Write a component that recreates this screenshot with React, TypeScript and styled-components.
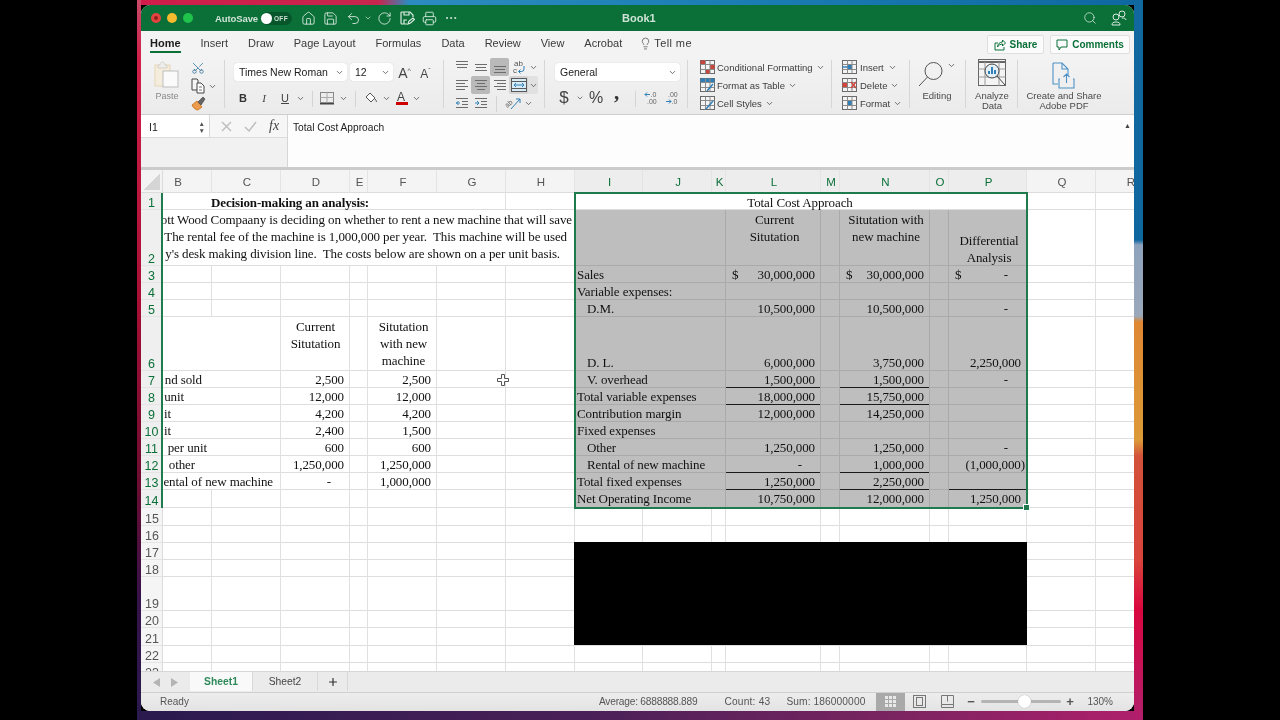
import React from "react";
import styled, { createGlobalStyle } from "styled-components";
import { House, Save, Undo2, RotateCw, Printer, Ellipsis, Search, Scissors, Lightbulb, ChevronDown, Plus } from "lucide-react";

const Global = createGlobalStyle`
  html, body { margin: 0; padding: 0; background: #000; }
  #root { width: 1280px; height: 720px; overflow: hidden; }
  * { box-sizing: border-box; }
`;

const UI = `"Liberation Sans", Arial, sans-serif`;
const GREEN = "#0a7038";

const Page = styled.div`
  width: 1280px; height: 720px; background: #000; display: flex; padding-left: 137px; font-family: ${UI};
  filter: blur(0.4px);
`;
const Wallpaper = styled.div`
  width: 1006px; height: 720px; padding: 5px 9px 9px 4px;
  background:
    linear-gradient(180deg, #11689f 0, #0f67a0 240px, #8ea3bc 245px, #9aa8ba 316px, #df8733 322px, #dc9a38 440px, #d2523a 456px, #d8443a 560px, #d9073f 610px, #b01f6c 720px) right top / 9px 100% no-repeat,
    linear-gradient(180deg, #c84a68 0, #d0204a 60px, #a80f35 300px, #6e0c30 480px, #35124a 600px, #2a1a4e 720px) left top / 4px 100% no-repeat,
    linear-gradient(90deg, #d01c4a 0, #c8254e 24%, #2c8cc0 27%, #1b7db4 60%, #0f67a0 100%) left top / 100% 5px no-repeat,
    linear-gradient(90deg, #2a1a4e 0, #4a2058 45%, #7a2460 75%, #b01f6c 100%) left bottom / 100% 9px no-repeat;
`;
const Window = styled.div`
  width: 993px; height: 706px; border-radius: 9px; overflow: hidden; display: flex; flex-direction: column; background: #fff;
`;

/* Title bar */
const TitleBar = styled.div`
  height: 26px; flex: none; background: ${GREEN}; display: flex; align-items: center; color: #e8f2ec; padding-right: 2px;
`;
const TitleLeft = styled.div`
  flex: 0 0 481px; display: flex; align-items: center; padding-left: 10px;
`;
const Light = styled.span<{ $c: string; $dot?: boolean }>`
  width: 10px; height: 10px; border-radius: 50%; background: ${(p) => p.$c}; margin-right: 6px; display: flex; align-items: center; justify-content: center;
  &::after { content: ""; width: 4px; height: 4px; border-radius: 50%; background: ${(p) => (p.$dot ? "#8e1f1c" : "transparent")}; }
`;
const AutoSave = styled.span`
  font-size: 9.5px; font-weight: 700; margin-left: 16px; color: #cfe3d7; letter-spacing: -0.1px; width: 46px;
`;
const Toggle = styled.span`
  width: 31px; height: 13px; border-radius: 7px; background: #07562b; display: flex; align-items: center; gap: 2px; font-size: 6.5px; letter-spacing: .3px; color: #cde0d4; font-weight: 700;
  &::before { content: ""; width: 11px; height: 11px; border-radius: 50%; background: #fff; margin-left: 0; }
  margin-right: 5px;
`;
const TitleBtn = styled.span<{ $w?: number; $ml?: number }>`
  width: ${(p) => p.$w ?? 22}px; height: 20px; display: flex; align-items: center; justify-content: center; color: #dcebe2; flex: none; margin-left: ${(p) => p.$ml ?? 0}px;
`;
const BookName = styled.span`
  font-size: 11px; font-weight: 700; color: #cfe3d7; width: 31px; white-space: nowrap;
`;
const TitleRight = styled.div`
  margin-left: auto; display: flex;
`;

/* Tabs */
const TabsRow = styled.div`
  height: 25px; flex: none; background: #f3f3f3; display: flex; align-items: flex-start; padding: 0 4px 0 9px; gap: 20px;
`;
const Tab = styled.span<{ $on?: boolean }>`
  height: 22px; padding-top: 4px; font-size: 11px; line-height: 16px; color: ${(p) => (p.$on ? "#1d1d1d" : "#3a3a3a")}; font-weight: ${(p) => (p.$on ? 700 : 400)};
  border-bottom: 2px solid ${(p) => (p.$on ? GREEN : "transparent")}; white-space: nowrap; display: flex; align-items: center;
`;
const TellMe = styled(Tab)`
  margin-left: -3px; gap: 2px; letter-spacing: 0.4px;
`;
const HeadActions = styled.div`
  margin-left: auto; display: flex; gap: 6px; padding-top: 4px;
`;
const HeadBtn = styled.span<{ $w: number }>`
  width: ${(p) => p.$w}px; height: 19px; background: #fbfbfb; border: 1px solid #dfdfdf; border-radius: 2px; color: ${GREEN}; font-size: 10px; font-weight: 700;
  display: flex; align-items: center; justify-content: center; gap: 4px;
`;

/* Ribbon */
const Ribbon = styled.div`
  height: 59px; flex: none; display: flex; background: linear-gradient(180deg, #f3f3f3, #ebebeb); border-bottom: 1px solid #cfcfcf;
`;
const Group = styled.div<{ $w: number; $pl?: number; $last?: boolean }>`
  width: ${(p) => p.$w}px; flex: none; padding-left: ${(p) => p.$pl ?? 0}px; height: 58px;
  background: ${(p) => (p.$last ? "none" : "linear-gradient(#d6d6d6, #d6d6d6) right 4px / 1px 48px no-repeat")};
`;
const ClipGroup = styled(Group)`
  display: flex;
`;
const PasteCol = styled.div`
  width: 48px; padding: 5px 9px 0 13px; display: flex; flex-direction: column; gap: 3px;
`;
const SmallLabel = styled.span<{ $c?: string; $s?: number }>`
  font-size: ${(p) => p.$s ?? 9.5}px; line-height: 10px; color: ${(p) => p.$c ?? "#4a4a4a"}; text-align: center; white-space: nowrap; display: block;
`;
const ClipTools = styled.div`
  display: flex; flex-direction: column; align-items: flex-start; padding-top: 3px; width: 30px;
`;
const ToolRow = styled.div<{ $h?: number; $ml?: number }>`
  display: flex; align-items: center; height: ${(p) => p.$h ?? 18}px; margin-left: ${(p) => p.$ml ?? 0}px;
`;
const TurnedScissors = styled(Scissors)`
  transform: rotate(-90deg);
`;
const Select = styled.div<{ $w: number }>`
  width: ${(p) => p.$w}px; height: 18px; background: #fff; border-radius: 3px; box-shadow: 0 0 1px #bbb; font-size: 10.5px; color: #222;
  display: flex; align-items: center; justify-content: space-between; padding: 0 3px 0 5px; margin-right: 3px; white-space: nowrap; flex: none;
`;
const IconBtn = styled.span<{ $w?: number; $bg?: string; $mr?: number }>`
  width: ${(p) => p.$w ?? 18}px; height: 18px; flex: none; display: flex; align-items: center; justify-content: center; color: #444;
  background: ${(p) => p.$bg ?? "transparent"}; margin-right: ${(p) => p.$mr ?? 0}px; border-radius: 2px; font-size: 12px;
`;
const BoldLetter = styled.span`
  font-weight: 700; font-size: 11px; font-family: ${UI}; color: #333;
`;
const ItalicLetter = styled.span`
  font-style: italic; font-size: 11px; font-family: "Liberation Serif", serif; color: #444;
`;
const UnderLetter = styled.span`
  text-decoration: underline; font-size: 11px; color: #444;
`;
const BigA = styled.span<{ $s: number }>`
  font-size: ${(p) => p.$s}px; color: #444; line-height: 18px;
`;
const Caret = styled.span`
  font-size: 7px; color: #555; vertical-align: 5px;
`;
const VSep = styled.span<{ $ml: number; $mr: number }>`
  width: 1px; height: 16px; flex: none; background: #d4d4d4; margin: 1px ${(p) => p.$mr}px 0 ${(p) => p.$ml}px;
`;
const GlyphBig = styled.span<{ $s: number }>`
  font-size: ${(p) => p.$s}px; color: #444; font-family: ${UI}; line-height: 18px;
`;
const CommaGlyph = styled.span`
  font-size: 21px; color: #333; font-weight: 700; font-family: "Liberation Serif", serif; line-height: 18px; margin: -13px 3px 0 0;
`;
const AlignGrid = styled.div`
  padding: 2px 0 0 8px; display: grid; grid-template-rows: repeat(3, 18px);
`;
const AlignRow = styled.div`
  display: flex; align-items: center; height: 18px;
`;
const MergeWrap = styled.span`
  display: flex; background: #e1e1e1; border-radius: 2px;
`;
const Rows = styled.div<{ $pt: number }>`
  padding-top: ${(p) => p.$pt}px; display: flex; flex-direction: column;
`;
const Row2 = styled.div<{ $mt?: number }>`
  display: flex; align-items: center; height: 18px; margin-top: ${(p) => p.$mt ?? 0}px;
`;
const ListItem = styled.div`
  display: flex; align-items: center; height: 18px; font-size: 9.5px; color: #3c3c3c; white-space: nowrap;
`;
const ListIcon = styled.span<{ $mr: number }>`
  display: flex; width: 15px; margin-right: ${(p) => p.$mr}px; flex: none;
`;
const Chev = styled(ChevronDown)<{ $ml?: number }>`
  margin-left: ${(p) => p.$ml ?? 0}px; color: #444; flex: none;
`;
const BigTool = styled.div<{ $w: number }>`
  width: ${(p) => p.$w}px; display: flex; flex-direction: column; align-items: center; height: 58px;
`;
const BigIconBox = styled.div<{ $h: number; $pt: number }>`
  height: ${(p) => p.$h}px; padding-top: ${(p) => p.$pt}px; display: flex; align-items: flex-start; justify-content: center; flex: none;
`;

/* Formula bar */
const FormulaBar = styled.div`
  height: 52px; flex: none; display: flex; background: #fdfdfd;
`;
const NameCol = styled.div`
  width: 147px; flex: none; display: flex; flex-direction: column; border-right: 1px solid #d6d6d6;
`;
const NameRow = styled.div`
  height: 22px; display: flex; background: #f6f6f6;
`;
const NameBox = styled.div`
  width: 69px; background: #fff; border-right: 1px solid #d8d8d8; font-size: 10.5px; color: #222; display: flex; align-items: center; justify-content: space-between; padding: 1px 4px 0 8px;
`;
const Spin = styled.span`
  display: flex; flex-direction: column; font-size: 6.5px; line-height: 7px; color: #555;
`;
const FxTools = styled.div`
  flex: 1; display: flex; align-items: center; padding-left: 11px; gap: 12px;
`;
const FxLabel = styled.span`
  font-family: "Liberation Serif", serif; font-style: italic; font-size: 14px; color: #444;
`;
const NameSpare = styled.div`
  flex: 1; background: #f1f1f1; border-top: 1px solid #dcdcdc;
`;
const FormulaText = styled.div`
  flex: 1; font-size: 10.2px; color: #222; padding: 7px 0 0 5px; line-height: 12px;
`;
const Collapse = styled.span`
  font-size: 7px; color: #444; padding: 7px 3px 0 0;
`;
const Divider = styled.div`
  height: 3px; flex: none; background: #cbcbcb;
`;

/* Sheet */
const colNames = "B C D E F G H I J K L M N O P Q R".split(" ");
const colW = [49, 69, 69, 18, 69, 69, 69, 68, 69, 14, 95, 19, 90, 19, 78, 69, 69];
const rowH = [17, 56, 17, 17, 17, 54, 17, 17, 17, 17, 17, 17, 17, 17.5, 18, 17, 17, 17, 34, 17, 18, 17, 17];

const Sheet = styled.div`
  height: 501px; width: 993px; overflow: hidden; display: grid; background: #fff;
  grid-template-columns: 22px ${colW.map((w) => w + "px").join(" ")};
  grid-template-rows: 23px ${rowH.map((h) => h + "px").join(" ")};
  font-family: "Liberation Serif", "Times New Roman", serif; font-size: 13px; color: #111; letter-spacing: -0.1px;
`;
const Corner = styled.div`
  grid-column: 1; grid-row: 1; background: #f3f3f3; border-right: 1px solid #dcdcdc; border-bottom: 1px solid #dcdcdc; display: flex; align-items: flex-end; justify-content: flex-end; padding: 0 2px 2px 0;
  &::after { content: ""; width: 16px; height: 16px; background: linear-gradient(135deg, transparent 50%, #d5d5d5 50%); }
`;
const ColHead = styled.div<{ $col: number; $sel: boolean; $clipped: boolean }>`
  grid-column: ${(p) => p.$col}; grid-row: 1; font-family: ${UI}; font-size: 11.5px; display: flex; align-items: center; justify-content: center; letter-spacing: 0;
  padding: ${(p) => (p.$clipped ? "1px 18px 0 0" : "1px 0 0 2px")};
  color: ${(p) => (p.$sel ? GREEN : "#555")}; background: ${(p) => (p.$sel ? "#ededed" : "#f4f4f4")}; border-right: 1px solid #e4e4e4; border-bottom: 1px solid #dcdcdc;
`;
const RowHead = styled.div<{ $row: number; $sel: boolean }>`
  grid-column: 1; grid-row: ${(p) => p.$row}; font-family: ${UI}; font-size: 12.5px; line-height: 13px; display: flex; align-items: flex-end; justify-content: center; padding: 0 0 0 1px; letter-spacing: 0;
  color: ${(p) => (p.$sel ? GREEN : "#555")}; background: ${(p) => (p.$sel ? "#efefef" : "#f5f5f5")};
  border-right: ${(p) => (p.$sel ? `2px solid #1f7a4d` : "1px solid #dcdcdc")}; box-shadow: inset 0 -1px #e4e4e4;
`;
const Cell = styled.div<{ $col: number; $span: number; $row: number; $shade: boolean; $h: string; $v: string; $under: boolean; $pt: number }>`
  grid-column: ${(p) => p.$col} / span ${(p) => p.$span}; grid-row: ${(p) => p.$row}; overflow: hidden; display: flex; flex-direction: column;
  align-items: ${(p) => p.$h}; justify-content: ${(p) => p.$v}; line-height: 17px; white-space: pre; padding-top: ${(p) => p.$pt}px;
  background: ${(p) => (p.$shade ? "#bebebe" : "#fff")};
  box-shadow: inset -1px 0 ${(p) => (p.$shade ? "#aaaaaa" : "#e0e0e0")}, inset 0 -1px ${(p) => (p.$under ? "#1a1a1a" : p.$shade ? "#aaaaaa" : "#dedede")};
`;
const Line = styled.div<{ $l: number; $r: number; $bold?: boolean }>`
  flex: none; padding: 0 ${(p) => p.$r}px 0 ${(p) => p.$l}px; font-weight: ${(p) => (p.$bold ? 700 : 400)}; letter-spacing: ${(p) => (p.$bold ? "-0.14px" : "inherit")};
`;
const AcctLine = styled.div<{ $r: number }>`
  flex: none; align-self: stretch; display: flex; justify-content: space-between; padding: 0 ${(p) => p.$r}px 0 6px;
`;
const Selection = styled.div`
  grid-column: 9 / 17; grid-row: 2 / 16; border: 2px solid #1f7a4d; margin: -1px; position: relative; pointer-events: none; z-index: 2;
  &::after { content: ""; position: absolute; right: -4px; bottom: -4px; width: 5px; height: 5px; background: #1f7a4d; border: 1px solid #fff; box-sizing: content-box; }
`;
const Redaction = styled.div`
  grid-column: 9 / 17; grid-row: 18 / 23; background: #000; margin: -1px 0 1px -1px; z-index: 2;
`;
const CursorMark = styled.svg`
  position: absolute; left: 356px; top: 204px; z-index: 3;
`;
const SheetWrap = styled.div`
  position: relative; flex: none; height: 501px;
`;

/* Bottom */
const SheetTabs = styled.div`
  height: 21px; flex: none; background: #ebebeb; border-top: 1px solid #d6d6d6; display: flex; align-items: flex-start; color: #666;
`;
const NavArrows = styled.div`
  width: 49px; height: 20px; display: flex; padding-left: 12px; gap: 11px; align-items: center; flex: none;
`;
const SheetTab = styled.div<{ $on?: boolean; $w: number }>`
  width: ${(p) => p.$w}px; height: 19px; flex: none; display: flex; align-items: center; justify-content: center; font-size: 10.3px;
  font-weight: ${(p) => (p.$on ? 700 : 400)}; color: ${(p) => (p.$on ? "#2f8a5a" : "#444")}; background: ${(p) => (p.$on ? "#f9f9f9" : "transparent")};
  border-right: 1px solid #d8d8d8;
`;
const AddSheet = styled(SheetTab)`
  color: #333;
`;
const Status = styled.div`
  height: 19px; flex: none; background: linear-gradient(180deg, #ededed, #e3e3e3); border-top: 1px solid #cfcfcf; display: flex; align-items: center; color: #555; padding-bottom: 1px;
`;
const Ready = styled.span`
  margin-left: 19px; margin-right: auto; font-size: 10px;
`;
const Stat = styled.span<{ $mr: number; $ls: number }>`
  margin-right: ${(p) => p.$mr}px; white-space: nowrap; font-size: 10.2px; letter-spacing: ${(p) => p.$ls}px;
`;
const ViewBtn = styled.span<{ $on?: boolean; $w: number }>`
  width: ${(p) => p.$w}px; height: 18px; display: flex; align-items: center; justify-content: center; background: ${(p) => (p.$on ? "#a9a9a9" : "transparent")}; color: #777; flex: none;
`;
const Zoom = styled.div`
  display: flex; align-items: center; margin-left: 5px; font-size: 10px;
`;
const Slider = styled.div`
  width: 80px; height: 3px; border-radius: 2px; background: #b4b4b4; margin: 0 4px 0 6px; position: relative;
`;
const Knob = styled.span`
  position: absolute; left: 37px; top: -5px; width: 13px; height: 13px; border-radius: 50%; background: #fff; box-shadow: 0 0 1px #999;
`;
const Pct = styled.span`
  margin: 0 21px 0 13px;
`;
const Pm = styled.span`
  font-size: 13px; color: #555; font-weight: 700; line-height: 12px; width: 9px; text-align: center;
`;

/* Drawn icons */
const LineIcon = ({ ls, w = 16 }: { ls: [number, number, number][]; w?: number }) => (
  <svg width={w} height={14} viewBox={`0 0 ${w} 14`} stroke="#6c6c6c" strokeWidth="1" fill="none">
    {ls.map(([a, b, y], i) => <path key={i} d={`M${a} ${y}.5H${b}`} />)}
  </svg>
);
const Wrap = () => (
  <svg width="16" height="16" viewBox="0 0 16 16" fill="none">
    <text x="3" y="7" fontSize="8" fill="#555" fontFamily={UI}>ab</text>
    <text x="2" y="14" fontSize="8" fill="#555" fontFamily={UI}>c</text>
    <path d="M13 7v3a2.500 2.500 0 0 1-2.500 2.500H8m1.500-2L7.500 12.500l2 2" stroke="#2f7fb8" strokeWidth="1" />
  </svg>
);
const MergeIcon = () => (
  <svg width="16" height="14" viewBox="0 0 16 14" fill="none">
    <rect x=".5" y=".5" width="15" height="13" fill="#d8ecf7" stroke="#5a5a5a" />
    <path d="M.5 3.500h15M.5 10.500h15" stroke="#5a5a5a" />
    <path d="M3 7h10M5 5L3 7l2 2M11 5l2 2-2 2" stroke="#2f7fb8" />
  </svg>
);
const Orient = () => (
  <svg width="18" height="16" viewBox="0 0 18 16" fill="none">
    <text x="1" y="11" fontSize="7" fill="#555" fontFamily={UI} transform="rotate(-40 5 9)">ab</text>
    <path d="M7 14L16 4m-4 0h4v4" stroke="#2f7fb8" strokeWidth="1" />
  </svg>
);
const Indent = ({ rev }: { rev?: boolean }) => (
  <svg width="14" height="12" viewBox="0 0 14 12" fill="none">
    <path d="M1 1.500h12M7 4.500h6M7 7.500h6M1 10.500h12" stroke="#6c6c6c" />
    {rev ? <path d="M1 6h4M3.500 4L1.500 6l2 2" stroke="#2f7fb8" /> : <path d="M1 6h4M3 4l2 2-2 2" stroke="#2f7fb8" />}
  </svg>
);
const Decimals = ({ more }: { more?: boolean }) => (
  <svg width="14" height="16" viewBox="0 0 14 16" fill="none">
    <text x={more ? 3 : 6.500} y="7" fontSize="7" fill="#666" fontFamily={UI}>{more ? ".00" : ".0"}</text>
    <text x={more ? 6.500 : 3} y="14" fontSize="7" fill="#666" fontFamily={UI}>{more ? ".0" : ".00"}</text>
    {more
      ? <path d="M1 11.500h5M4 9.500l2 2-2 2" stroke="#2f7fb8" />
      : <path d="M1 4.500h5M3 2.500l-2 2 2 2" stroke="#2f7fb8" />}
  </svg>
);
const Mini = ({ tint, cells, mark }: { tint: string; cells?: string; mark?: string }) => (
  <svg width="15" height="14" viewBox="0 0 15 14" fill="none">
    <rect x=".5" y=".5" width="14" height="13" fill="#f4f4f4" stroke="#6a6a6a" />
    {cells && <path d={cells} fill={tint} />}
    <path d="M.5 4.500h14M.5 9.500h14M5.500.5v13M10 .5v13" stroke="#8a8a8a" />
    {mark && <path d={mark} stroke={tint} strokeWidth="1.500" />}
  </svg>
);
const PasteIcon = () => (
  <svg width="26" height="27" viewBox="0 0 26 27" fill="none">
    <rect x="1" y="4" width="15" height="21" fill="#f4ecdc" stroke="#e6d6b6" />
    <path d="M6 4c0-4 5-4 5 0h2v3H4V4z" fill="#eee" stroke="#d6d0c6" />
    <rect x="9" y="10" width="15" height="16" fill="#fafafa" stroke="#bdbdbd" />
  </svg>
);
const CopyIcon = () => (
  <svg width="14" height="16" viewBox="0 0 14 16" fill="none" stroke="#444">
    <path d="M1 1h5l1 1v10H1z" fill="#f6f6f6" />
    <path d="M6 5h4l3 3v7H6z" fill="#fff" />
    <path d="M8 9h3M8 12h3" stroke="#777" />
  </svg>
);
const BrushIcon = () => (
  <svg width="16" height="16" viewBox="0 0 16 16" fill="none">
    <path d="M1 10l5-4 5 6-4 3C5 15 2 13 1 10z" fill="#eb9c4e" stroke="#d07f2e" />
    <path d="M7 7l5-5 2 2-4 6z" fill="#666" stroke="#444" strokeWidth=".7" />
  </svg>
);
const BorderIcon = () => (
  <svg width="16" height="14" viewBox="0 0 16 14" fill="none">
    <rect x="1.500" y="1.500" width="13" height="10" stroke="#888" />
    <path d="M8 1.500v10M1.500 6.500h13" stroke="#aaa" />
    <path d="M1 12.800h14" stroke="#444" strokeWidth="1.500" />
  </svg>
);
const FillIcon = () => (
  <svg width="14" height="14" viewBox="0 0 14 14" fill="none" stroke="#555">
    <path d="M6 2l5 5-4 4-5-5z" fill="#fff" />
    <path d="M11 8c1 1.500 1.500 2 1.500 3" stroke="#555" />
  </svg>
);
const ColorA = () => (
  <svg width="14" height="16" viewBox="0 0 14 16">
    <text x="2" y="11" fontSize="12" fill="#444" fontFamily={UI}>A</text>
    <rect x="1" y="12" width="12" height="3" fill="#c00" />
  </svg>
);
const Lens = () => (
  <svg width="27" height="27" viewBox="0 0 27 27" fill="none" stroke="#555" strokeWidth="1">
    <circle cx="15.500" cy="10" r="8.500" />
    <path d="M9.500 16L1 25" />
  </svg>
);
const Analyze = () => (
  <svg width="28" height="30" viewBox="0 0 28 30" fill="none" stroke="#666">
    <rect x=".5" y=".5" width="27" height="26" fill="#f4f4f4" />
    <path d="M.5 3h27" strokeWidth="2" stroke="#666" />
    <path d="M.5 10h27M.5 18h27M7 3v24M21 3v24" stroke="#9a9a9a" />
    <circle cx="14" cy="12" r="7" fill="#e4eff7" stroke="#444" />
    <path d="M19 17l8 9" stroke="#444" />
    <path d="M11 15v-3M14 15V8M17 15v-4" stroke="#2f7fb8" strokeWidth="2" />
  </svg>
);
const Adobe = () => (
  <svg width="24" height="28" viewBox="0 0 24 28" fill="none" stroke="#4d92c6" strokeWidth="1.100">
    <path d="M1 1h9l6 6v6" />
    <path d="M1 1v21h5" />
    <path d="M10 1v6h6" />
    <path d="M8 17h-1v9h15v-9h-1M14.500 21V12M11.500 15l3-3 3 3" stroke="#4d92c6" />
  </svg>
);
const People = () => (
  <svg width="17" height="17" viewBox="0 0 17 17" fill="none" stroke="#dcebe2" strokeWidth="1">
    <circle cx="6" cy="7" r="3" />
    <circle cx="12" cy="4" r="3" />
    <path d="M2 15c0-2 1-3 4-3s4 1 4 3zM12 8c2 0 4 .5 4 2" />
  </svg>
);
const SaveEdit = () => (
  <svg width="16" height="16" viewBox="0 0 16 16" fill="none" stroke="#dcebe2" strokeWidth="1.200">
    <path d="M8 14H3a1 1 0 0 1-1-1V3a1 1 0 0 1 1-1h8l3 3v2" />
    <path d="M5 2v3h5V2M5 14v-4h3" />
    <path d="M9 14l1-3 4-3 1.500 1.500-4 3.500z" />
  </svg>
);
const ShareIco = () => (
  <svg width="12" height="12" viewBox="0 0 12 12" fill="none" stroke={GREEN} strokeWidth="1">
    <path d="M4 4H1v7h9V8" />
    <path d="M3.500 8c0-3 2.500-5 5-5V1l3 3-3 3V5c-2 0-4 1-5 3z" />
  </svg>
);
const CommentIco = () => (
  <svg width="12" height="12" viewBox="0 0 12 12" fill="none" stroke={GREEN} strokeWidth="1">
    <path d="M1 1h10v7H5l-2 3V8H1z" />
  </svg>
);
const Tri = ({ dir }: { dir: "l" | "r" }) => (
  <svg width="7" height="9" viewBox="0 0 7 9"><path d={dir === "l" ? "M7 0v9L0 4.500z" : "M0 0v9l7-4.500z"} fill="#b4b4b4" /></svg>
);
const V1 = () => (
  <svg width="13" height="13" viewBox="0 0 13 13" fill="#e9e9e9"><path d="M1 1h3v3H1zM5 1h3v3H5zM9 1h3v3H9zM1 5h3v3H1zM5 5h3v3H5zM9 5h3v3H9zM1 9h3v3H1zM5 9h3v3H5zM9 9h3v3H9z" /></svg>
);
const V2 = () => (
  <svg width="13" height="13" viewBox="0 0 13 13" fill="none" stroke="#777"><rect x=".5" y=".5" width="12" height="12" /><rect x="3.500" y="2.500" width="6" height="8" /></svg>
);
const V3 = () => (
  <svg width="13" height="13" viewBox="0 0 13 13" fill="none" stroke="#777"><path d="M.5 9.500v-9h12v9h-12v3h12v-3M6.500 .5v6" /></svg>
);

/* Sheet data */
type Spec = {
  text?: string[]; h?: string; v?: string; span?: number; l?: number[]; r?: number[]; under?: boolean; bold?: boolean; dollar?: boolean;
};
const R = (t: string, r = 6, under = false): Spec => ({ text: [t], h: "flex-end", r: [r], under });
const L = (t: string, l = 2, span = 3): Spec => ({ text: [t], h: "flex-start", l: [l], span });
const D = (t: string, r: number): Spec => ({ text: [t], dollar: true, r: [r] });
const Clip = (t: string, r: number): Spec => ({ span: 2, h: "flex-end", text: [t], r: [r] });
const U: Spec = { under: true };

const sheet: Record<string, Spec> = {
  B1: { span: 6, v: "flex-start", text: ["Decision-making an analysis:"], h: "flex-end", r: [137], bold: true },
  I1: { span: 8, v: "flex-start", text: ["Total Cost Approach"], h: "center", r: [2] },
  B2: { span: 7, v: "flex-start", h: "flex-end", text: ["ott Wood Compaany is deciding on whether to rent a new machine that will save", "The rental fee of the machine is 1,000,000 per year.  This machine will be used", "y's desk making division line.  The costs below are shown on a per unit basis."], r: [3, 8, 15] },
  I2: { span: 3 },
  L2: { v: "flex-start", h: "center", text: ["Current", "Situtation"], l: [2, 2] },
  N2: { v: "flex-start", h: "center", text: ["Situtation with", "new machine"], l: [2, 2] },
  P2: { h: "center", text: ["Differential", "Analysis"], l: [2, 2] },
  I3: L("Sales"), L3: D("30,000,000", 6), N3: D("30,000,000", 6), P3: D("-", 19),
  I4: L("Variable expenses:"),
  I5: L("D.M.", 12), L5: R("10,500,000"), N5: R("10,500,000"), P5: R("-", 19),
  B6: { span: 2 },
  D6: { v: "flex-start", h: "center", text: ["Current", "Situtation"] },
  F6: { v: "flex-start", h: "center", text: ["Situtation", "with new", "machine"], l: [2, 2, 2] },
  I6: L("D. L.", 12), L6: R("6,000,000"), N6: R("3,750,000"), P6: R("2,250,000"),
  B7: Clip("nd sold", 79), D7: R("2,500"), F7: R("2,500"),
  I7: L("V. overhead", 12), L7: R("1,500,000", 6, true), N7: R("1,500,000", 6, true), P7: R("-", 19),
  B8: Clip("unit", 97), D8: R("12,000"), F8: R("12,000"),
  I8: L("Total variable expenses"), L8: R("18,000,000", 6, true), N8: R("15,750,000", 6, true),
  B9: Clip("it", 110), D9: R("4,200"), F9: R("4,200"),
  I9: L("Contribution margin"), L9: R("12,000,000"), N9: R("14,250,000"),
  B10: Clip("it", 110), D10: R("2,400"), F10: R("1,500"),
  I10: L("Fixed expenses"),
  B11: Clip("per unit", 74), D11: R("600"), F11: R("600"),
  I11: L("Other", 12), L11: R("1,250,000"), N11: R("1,250,000"), P11: R("-", 19),
  B12: Clip("other", 86), D12: R("1,250,000"), F12: R("1,250,000"),
  I12: L("Rental of new machine", 12), L12: R("-", 19, true), N12: R("1,000,000", 6, true), P12: R("(1,000,000)", 2),
  B13: Clip("ental of new machine", 8), D13: R("-", 19), F13: R("1,000,000"),
  I13: L("Total fixed expenses"), L13: R("1,250,000", 6, true), N13: R("2,250,000", 6, true), P13: U,
  I14: L("Net Operating Income"), L14: R("10,750,000"), N14: R("12,000,000"), P14: R("1,250,000"),
};

const renderCells = () => {
  const out: React.ReactNode[] = [];
  rowH.forEach((_, ri) => {
    const rowNo = ri + 1;
    let skip = 0;
    colNames.forEach((name, ci) => {
      if (skip > 0) { skip--; return; }
      const s = sheet[name + rowNo] ?? {};
      const span = s.span ?? 1;
      skip = span - 1;
      const shade = rowNo >= 2 && rowNo <= 14 && ci >= 7 && ci <= 14;
      const v = rowNo === 14 ? "center" : s.v ?? "flex-end";
      out.push(
        <Cell key={name + rowNo} $col={ci + 2} $span={span} $row={rowNo + 1} $shade={shade}
          $h={s.h ?? "flex-start"} $v={v} $under={!!s.under} $pt={v === "flex-start" ? 1 : 0}>
          {s.dollar ? (
            <AcctLine $r={s.r?.[0] ?? 6}><span>$</span><span>{s.text?.[0]}</span></AcctLine>
          ) : (
            s.text?.map((t, i) => <Line key={i} $l={s.l?.[i] ?? 0} $r={s.r?.[i] ?? 0} $bold={s.bold}>{t}</Line>)
          )}
        </Cell>
      );
    });
  });
  return out;
};

export default function App() {
  const ic = { size: 15, strokeWidth: 1.4 };
  return (
    <Page>
      <Global />
      <Wallpaper>
        <Window>
          <TitleBar>
            <TitleLeft>
              <Light $c="#e2433e" $dot /><Light $c="#f4bb2e" /><Light $c="#1fc24b" />
              <AutoSave>AutoSave</AutoSave>
              <Toggle>OFF</Toggle>
              <TitleBtn><House {...ic} /></TitleBtn>
              <TitleBtn><Save {...ic} /></TitleBtn>
              <TitleBtn $ml={1}><Undo2 {...ic} /></TitleBtn>
              <TitleBtn $w={8}><ChevronDown size={8} strokeWidth={2} /></TitleBtn>
              <TitleBtn $ml={1}><RotateCw {...ic} /></TitleBtn>
              <TitleBtn $ml={1}><SaveEdit /></TitleBtn>
              <TitleBtn><Printer {...ic} /></TitleBtn>
              <TitleBtn><Ellipsis size={14} strokeWidth={1.6} /></TitleBtn>
            </TitleLeft>
            <BookName>Book1</BookName>
            <TitleRight>
              <TitleBtn $w={28}><Search size={14} strokeWidth={1.3} /></TitleBtn>
              <TitleBtn $w={28}><People /></TitleBtn>
            </TitleRight>
          </TitleBar>

          <TabsRow>
            <Tab $on>Home</Tab><Tab>Insert</Tab><Tab>Draw</Tab><Tab>Page Layout</Tab><Tab>Formulas</Tab><Tab>Data</Tab><Tab>Review</Tab><Tab>View</Tab><Tab>Acrobat</Tab>
            <TellMe><Lightbulb size={13} strokeWidth={1.2} />Tell me</TellMe>
            <HeadActions>
              <HeadBtn $w={57}><ShareIco />Share</HeadBtn>
              <HeadBtn $w={80}><CommentIco />Comments</HeadBtn>
            </HeadActions>
          </TabsRow>

          <Ribbon>
            <ClipGroup $w={84}>
              <PasteCol>
                <PasteIcon />
                <SmallLabel $c="#8a8a8a" $s={9}>Paste</SmallLabel>
              </PasteCol>
              <ClipTools>
                <ToolRow><IconBtn><TurnedScissors size={14} strokeWidth={1.3} color="#2f6f98" /></IconBtn></ToolRow>
                <ToolRow><IconBtn><CopyIcon /></IconBtn><Chev size={9} strokeWidth={2} $ml={1} /></ToolRow>
                <ToolRow $h={16} $ml={1}><IconBtn><BrushIcon /></IconBtn></ToolRow>
              </ClipTools>
            </ClipGroup>

            <Group $w={219} $pl={9}>
              <Rows $pt={7}>
                <Row2>
                  <Select $w={113}>Times New Roman<Chev size={9} strokeWidth={2} /></Select>
                  <Select $w={43}>12<Chev size={9} strokeWidth={2} /></Select>
                  <IconBtn $w={17} $mr={4}><BigA $s={14}>A<Caret>^</Caret></BigA></IconBtn>
                  <IconBtn $w={17}><BigA $s={12}>A<Caret>ˇ</Caret></BigA></IconBtn>
                </Row2>
                <Row2 $mt={8}>
                  <IconBtn $mr={3}><BoldLetter>B</BoldLetter></IconBtn>
                  <IconBtn $mr={3}><ItalicLetter>I</ItalicLetter></IconBtn>
                  <IconBtn><UnderLetter>U</UnderLetter></IconBtn>
                  <IconBtn $w={12}><Chev size={9} strokeWidth={2} /></IconBtn>
                  <VSep $ml={6} $mr={5} />
                  <IconBtn><BorderIcon /></IconBtn>
                  <IconBtn $w={14}><Chev size={9} strokeWidth={2} /></IconBtn>
                  <VSep $ml={5} $mr={6} />
                  <IconBtn><FillIcon /></IconBtn>
                  <IconBtn $w={12}><Chev size={9} strokeWidth={2} /></IconBtn>
                  <IconBtn $w={20}><ColorA /></IconBtn>
                  <IconBtn $w={8}><Chev size={9} strokeWidth={2} /></IconBtn>
                </Row2>
              </Rows>
            </Group>

            <Group $w={101}>
              <AlignGrid>
                <AlignRow>
                  <IconBtn $w={19}><LineIcon ls={[[2, 14, 1], [2, 14, 4], [3, 13, 7]]} /></IconBtn>
                  <IconBtn $w={19}><LineIcon ls={[[2, 14, 4], [3, 13, 7], [2, 14, 10]]} /></IconBtn>
                  <IconBtn $w={19} $bg="#b9b9b9"><LineIcon ls={[[2, 14, 6], [3, 13, 9], [2, 14, 12]]} /></IconBtn>
                  <IconBtn $w={19}><Wrap /></IconBtn>
                  <IconBtn $w={10}><Chev size={9} strokeWidth={2} /></IconBtn>
                </AlignRow>
                <AlignRow>
                  <IconBtn $w={19}><LineIcon ls={[[2, 14, 2], [2, 11, 5], [2, 14, 8], [2, 11, 11]]} /></IconBtn>
                  <IconBtn $w={19} $bg="#b9b9b9"><LineIcon ls={[[2, 14, 2], [4, 12, 5], [2, 14, 8], [4, 12, 11]]} /></IconBtn>
                  <IconBtn $w={19}><LineIcon ls={[[2, 14, 2], [5, 14, 5], [2, 14, 8], [5, 14, 11]]} /></IconBtn>
                  <MergeWrap>
                    <IconBtn $w={19} $bg="#d4d4d4"><MergeIcon /></IconBtn>
                    <IconBtn $w={10}><Chev size={9} strokeWidth={2} /></IconBtn>
                  </MergeWrap>
                </AlignRow>
                <AlignRow>
                  <IconBtn $w={19}><Indent rev /></IconBtn>
                  <IconBtn $w={19}><Indent /></IconBtn>
                  <VSep $ml={6} $mr={5} />
                  <IconBtn $w={22}><Orient /></IconBtn>
                  <IconBtn $w={8}><Chev size={9} strokeWidth={2} /></IconBtn>
                </AlignRow>
              </AlignGrid>
            </Group>

            <Group $w={143} $pl={10}>
              <Rows $pt={7}>
                <Row2><Select $w={125}>General<Chev size={9} strokeWidth={2} /></Select></Row2>
                <Row2 $mt={8}>
                  <IconBtn $w={18}><GlyphBig $s={17}>$</GlyphBig></IconBtn>
                  <IconBtn $w={13}><Chev size={8} strokeWidth={2} /></IconBtn>
                  <IconBtn $w={20} $mr={2}><GlyphBig $s={16}>%</GlyphBig></IconBtn>
                  <IconBtn $w={20}><CommaGlyph>,</CommaGlyph></IconBtn>
                  <VSep $ml={7} $mr={8} />
                  <IconBtn $w={14} $mr={7}><Decimals /></IconBtn>
                  <IconBtn $w={14}><Decimals more /></IconBtn>
                </Row2>
              </Rows>
            </Group>

            <Group $w={144} $pl={12}>
              <Rows $pt={2}>
                <ListItem><ListIcon $mr={2}><Mini tint="#c8473c" cells="M.5.5h5v4h-5zM10 4.500h4.500v5H10zM5.500 9.500H10V13.500H5.500z" /></ListIcon>Conditional Formatting<Chev size={9} strokeWidth={2} $ml={3} /></ListItem>
                <ListItem><ListIcon $mr={2}><Mini tint="#2f7fb8" cells="M.5.5h14v4H.5z" mark="M7 13l6-7" /></ListIcon>Format as Table<Chev size={9} strokeWidth={2} $ml={3} /></ListItem>
                <ListItem><ListIcon $mr={2}><Mini tint="#2f7fb8" mark="M6 13l7-8" /></ListIcon>Cell Styles<Chev size={9} strokeWidth={2} $ml={3} /></ListItem>
              </Rows>
            </Group>

            <Group $w={78} $pl={10}>
              <Rows $pt={2}>
                <ListItem><ListIcon $mr={3}><Mini tint="#2f7fb8" cells="M5.500 4.500H10v5H5.500z" mark="M.5 7h5" /></ListIcon>Insert<Chev size={9} strokeWidth={2} $ml={4} /></ListItem>
                <ListItem><ListIcon $mr={3}><Mini tint="#d0453c" cells="M.5 4.500h5v5h-5z" mark="M9 4l5 6M14 4l-5 6" /></ListIcon>Delete<Chev size={9} strokeWidth={2} $ml={3} /></ListItem>
                <ListItem><ListIcon $mr={3}><Mini tint="#2f7fb8" cells="M5.500 4.500H10v5H5.500z" /></ListIcon>Format<Chev size={9} strokeWidth={2} $ml={3} /></ListItem>
              </Rows>
            </Group>

            <Group $w={56}>
              <BigTool $w={54}>
                <BigIconBox $h={35} $pt={5}><Lens /><Chev size={9} strokeWidth={2} $ml={2} /></BigIconBox>
                <SmallLabel>Editing</SmallLabel>
              </BigTool>
            </Group>
            <Group $w={52}>
              <BigTool $w={52}>
                <BigIconBox $h={35} $pt={3}><Analyze /></BigIconBox>
                <SmallLabel>Analyze</SmallLabel>
                <SmallLabel>Data</SmallLabel>
              </BigTool>
            </Group>
            <Group $w={92} $last>
              <BigTool $w={92}>
                <BigIconBox $h={35} $pt={6}><Adobe /></BigIconBox>
                <SmallLabel>Create and Share</SmallLabel>
                <SmallLabel>Adobe PDF</SmallLabel>
              </BigTool>
            </Group>
          </Ribbon>

          <FormulaBar>
            <NameCol>
              <NameRow>
                <NameBox>I1<Spin><span>▲</span><span>▼</span></Spin></NameBox>
                <FxTools>
                  <svg width="11" height="11" viewBox="0 0 11 11" fill="none" stroke="#bdbdbd" strokeWidth="1.400"><path d="M1 1l9 9M10 1l-9 9" /></svg>
                  <svg width="13" height="11" viewBox="0 0 13 11" fill="none" stroke="#bdbdbd" strokeWidth="1.400"><path d="M1 6l4 4 7-9" /></svg>
                  <FxLabel>fx</FxLabel>
                </FxTools>
              </NameRow>
              <NameSpare />
            </NameCol>
            <FormulaText>Total Cost Approach</FormulaText>
            <Collapse>▲</Collapse>
          </FormulaBar>
          <Divider />

          <SheetWrap>
            <Sheet>
              <Corner />
              {colNames.map((c, i) => <ColHead key={c} $col={i + 2} $sel={i >= 7 && i <= 14} $clipped={i === 0}>{c}</ColHead>)}
              {rowH.map((_, i) => <RowHead key={i} $row={i + 2} $sel={i < 14}>{i + 1}</RowHead>)}
              {renderCells()}
              <Selection />
              <Redaction />
            </Sheet>
            <CursorMark width="12" height="12" viewBox="0 0 12 12" fill="#fff" stroke="#555">
              <path d="M4.500.5h3v4h4v3h-4v4h-3v-4h-4v-3h4z" />
            </CursorMark>
          </SheetWrap>

          <SheetTabs>
            <NavArrows><Tri dir="l" /><Tri dir="r" /></NavArrows>
            <SheetTab $on $w={63}>Sheet1</SheetTab>
            <SheetTab $w={65}>Sheet2</SheetTab>
            <AddSheet $w={30}><Plus size={12} strokeWidth={2.4} /></AddSheet>
          </SheetTabs>

          <Status>
            <Ready>Ready</Ready>
            <Stat $mr={27} $ls={-0.22}>Average: 6888888.889</Stat>
            <Stat $mr={16} $ls={0.2}>Count: 43</Stat>
            <Stat $mr={11} $ls={0.1}>Sum: 186000000</Stat>
            <ViewBtn $on $w={29}><V1 /></ViewBtn>
            <ViewBtn $w={28}><V2 /></ViewBtn>
            <ViewBtn $w={28}><V3 /></ViewBtn>
            <Zoom>
              <Pm>−</Pm>
              <Slider><Knob /></Slider>
              <Pm>+</Pm>
              <Pct>130%</Pct>
            </Zoom>
          </Status>
        </Window>
      </Wallpaper>
    </Page>
  );
}
